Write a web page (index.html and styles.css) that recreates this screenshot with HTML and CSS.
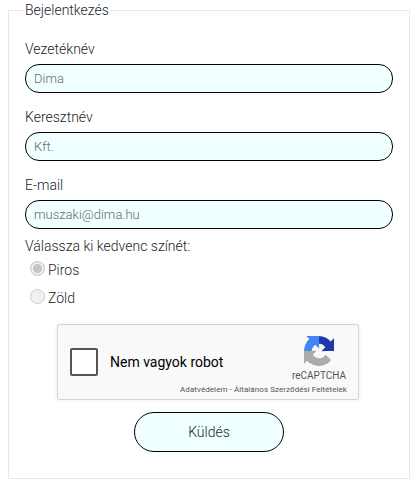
FILE: index.html
```html
<!DOCTYPE html>
<html lang="hu">
<head>
    <meta charset="UTF-8">
    <meta name="viewport" content="width=device-width, initial-scale=1.0">
    <title>Bejelentkezés</title>
    <link rel="stylesheet" href="styles.css">
</head>
<body>

    <form class="login-form">
        <fieldset class="login-box">
            <legend>Bejelentkezés</legend>

            <label class="field-label" for="lastname">Vezetéknév</label>
            <input class="field-input" type="text" id="lastname" placeholder="Dima">

            <label class="field-label" for="firstname">Keresztnév</label>
            <input class="field-input" type="text" id="firstname" placeholder="Kft.">

            <label class="field-label" for="email">E-mail</label>
            <input class="field-input" type="text" id="email" placeholder="muszaki@dima.hu">

            <p class="color-title">Válassza ki kedvenc színét:</p>
            <label class="color-option">
                <input type="radio" name="color" checked disabled>
                <span>Piros</span>
            </label>
            <label class="color-option">
                <input type="radio" name="color" disabled>
                <span>Zöld</span>
            </label>

            <div class="captcha">
                <span class="captcha-check"></span>
                <span class="captcha-text">Nem vagyok robot</span>
                <div class="captcha-brand">
                    <svg class="captcha-logo" viewBox="0 0 64 64" aria-hidden="true">
                        <path fill="#1c3aa9" d="M64 31.955l-.033-1.37V4.687l-7.16 7.16C50.93 4.674 41.996.093 31.96.093c-10.445 0-19.724 4.986-25.59 12.7L18.1 24.64a15.54 15.54 0 0 1 4.745-5.326c2.046-1.597 4.946-2.904 9.116-2.904.504 0 .893.06 1.18.17 5.166.408 9.644 3.258 12.283 7.4l-8.3 8.3c10.513-.04 22.39-.066 26.875.002"/>
                        <path fill="#4285f4" d="M31.955 0l-1.37.033H4.687l7.16 7.16C4.674 13.07.093 22.004.093 32.04c0 10.445 4.986 19.724 12.7 25.59L24.64 45.9a15.54 15.54 0 0 1-5.326-4.745c-1.597-2.046-2.904-4.946-2.904-9.116 0-.504.06-.893.17-1.18.408-5.166 3.258-9.644 7.4-12.283l8.3 8.3c-.04-10.513-.066-22.39.002-26.875"/>
                        <path fill="#ababab" d="M.002 32.045l.033 1.37v25.898l7.16-7.16C13.07 59.326 22.004 63.907 32.04 63.907c10.445 0 19.724-4.986 25.59-12.7L45.9 39.36a15.54 15.54 0 0 1-4.745 5.326c-2.046 1.597-4.946 2.904-9.116 2.904-.504 0-.893-.06-1.18-.17-5.166-.408-9.644-3.258-12.283-7.4l8.3-8.3c-10.513.04-22.39.066-26.875-.002"/>
                    </svg>
                    <span class="captcha-name">reCAPTCHA</span>
                </div>
                <span class="captcha-links">Adatvédelem - Általános Szerződési Feltételek</span>
            </div>

            <div class="submit-row">
                <button class="submit-btn" type="button">Küldés</button>
            </div>
        </fieldset>
    </form>

</body>
</html>
```

FILE: styles.css
```css
body {
    margin: 0 8px;
    font-family: Roboto, "Liberation Sans", sans-serif;
    font-weight: 300;
    font-size: 14px;
    line-height: 21px;
    color: #212529;
    background-color: #fff;
}
.login-box {
    margin: 0;
    padding: 18px 16px 26px 16px;
    border: 1px solid #e9e9e9;
    min-width: 0;
}
.login-box legend {
    padding: 0;
    font-size: 14px;
}
.field-label {
    display: block;
    margin-bottom: 4px;
}
.field-input {
    display: block;
    box-sizing: border-box;
    width: 100%;
    height: 29px;
    margin: 0 0 14px 0;
    padding: 0 8px;
    font-family: inherit;
    font-weight: 300;
    font-size: 13px;
    background-color: #f0ffff;
    border: 1px solid #000;
    border-radius: 14px;
    outline: none;
}
.field-input::placeholder {
    color: #6a6a6a;
    opacity: 1;
}
.color-title {
    margin: -6px 0 0 0;
    line-height: 19px;
}
.color-option {
    display: flex;
    align-items: center;
    height: 28px;
    padding-left: 5px;
    gap: 3px;
}
.color-option input {
    appearance: none;
    box-sizing: border-box;
    width: 15px;
    height: 15px;
    margin: -3px 0 0 0;
    background-color: #f1f1f1;
    border: 1px solid #ccc;
    border-radius: 50%;
}
.color-option input:checked {
    background-color: #c4c4c4;
    box-shadow: inset 0 0 0 2px #f1f1f1;
}
.captcha {
    position: relative;
    box-sizing: border-box;
    display: flex;
    align-items: center;
    width: 302px;
    height: 76px;
    margin: 12px 0 0 32px;
    padding-left: 12px;
    font-family: Roboto, "Liberation Sans", sans-serif;
    font-weight: 400;
    color: #000;
    background-color: #f9f9f9;
    border: 1px solid #d3d3d3;
    border-radius: 3px;
    box-shadow: 0 0 4px rgba(0, 0, 0, 0.08);
}
.captcha-check {
    box-sizing: border-box;
    width: 28px;
    height: 28px;
    background-color: #fff;
    border: 2px solid #555;
    border-radius: 2px;
}
.captcha-text {
    margin-left: 12px;
    font-size: 14px;
}
.captcha-brand {
    position: absolute;
    top: 11px;
    right: 12px;
    display: flex;
    flex-direction: column;
    align-items: center;
}
.captcha-logo {
    width: 30px;
    height: 30px;
}
.captcha-name {
    margin-top: 3px;
    font-size: 10px;
    line-height: 14px;
    color: #555;
}
.captcha-links {
    position: absolute;
    right: 11px;
    bottom: 4px;
    font-size: 8px;
    line-height: 11px;
    letter-spacing: 0.07px;
    color: #555;
}
.submit-row {
    display: flex;
    justify-content: center;
    margin-top: 12px;
}
.submit-btn {
    width: 150px;
    height: 40px;
    font-family: inherit;
    font-weight: 300;
    font-size: 14px;
    color: #212529;
    background-color: #f0ffff;
    border: 1px solid #000;
    border-radius: 20px;
}
```
